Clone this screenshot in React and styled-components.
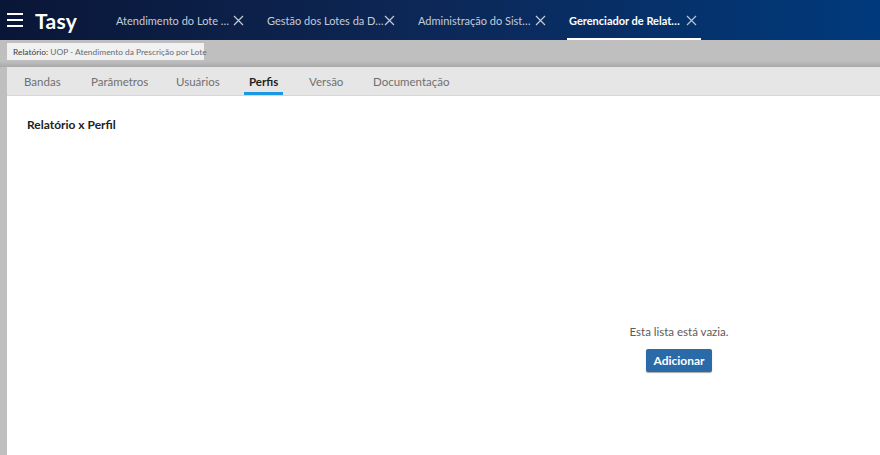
import React from "react";
import styled, { createGlobalStyle } from "styled-components";

const GlobalStyle = createGlobalStyle`
  html, body {
    margin: 0;
    padding: 0;
    height: 100%;
    overflow: hidden;
  }
  body {
    font-family: Lato, "Liberation Sans", sans-serif;
    background: #bfbfbf;
  }
  #root {
    height: 100%;
  }
`;

const appTabs = [
  { id: 1, label: "Atendimento do Lote …" },
  { id: 2, label: "Gestão dos Lotes da D…" },
  { id: 3, label: "Administração do Sist…" },
  { id: 4, label: "Gerenciador de Relat…", active: true }
];

// width of each tab slot, label start to next label start
const reportTabs = [
  { label: "Bandas", width: 67 },
  { label: "Parâmetros", width: 85 },
  { label: "Usuários", width: 73 },
  { label: "Perfis", width: 60, active: true },
  { label: "Versão", width: 64 },
  { label: "Documentação" }
];

const Page = styled.div`
  display: flex;
  flex-direction: column;
  height: 100%;
`;

const Header = styled.header`
  height: 40px;
  flex-shrink: 0;
  display: flex;
  align-items: stretch;
  background: linear-gradient(90deg, #0a1637 0%, #0d2654 45%, #003a7c 100%);
  color: #fff;
`;

const Burger = styled.button`
  width: 16px;
  margin: 0 12px 0 7px;
  padding: 0;
  border: 0;
  background: none;
  display: flex;
  flex-direction: column;
  justify-content: center;
  gap: 4px;

  span {
    display: block;
    height: 2px;
    background: #fff;
  }
`;

const Logo = styled.div`
  font-size: 21px;
  font-weight: 700;
  display: flex;
  align-items: center;
  width: 81px;
  letter-spacing: 0.3px;
`;

const AppTab = styled.div`
  display: flex;
  align-items: center;
  width: ${(p) => (p.$active ? "134px" : "151px")};
  box-sizing: border-box;
  padding-left: ${(p) => (p.$active ? "2px" : "0")};
  margin-left: ${(p) => (p.$active ? "-2px" : "0")};
  padding-top: 2px;
  font-size: 11px;
  font-weight: ${(p) => (p.$active ? 700 : 400)};
  color: ${(p) => (p.$active ? "#ffffff" : "#c4cbd8")};
  border-bottom: 2px solid ${(p) => (p.$active ? "#ffffff" : "transparent")};
`;

const TabLabel = styled.span`
  width: 117px;
  white-space: nowrap;
  overflow: hidden;
`;

const Close = styled.svg`
  width: 11px;
  height: 11px;
  flex-shrink: 0;
`;

const Body = styled.div`
  flex: 1;
  display: flex;
  flex-direction: column;
  padding-left: 7px;
`;

const CrumbBar = styled.div`
  height: 27px;
  display: flex;
  align-items: flex-start;
  padding: 3px 0 0 7px;
  margin-left: -7px;
  box-sizing: border-box;
  background: linear-gradient(180deg, #bfbfbf 0%, #bfbfbf 78%, #a9a9a9 100%);
`;

const Crumb = styled.div`
  height: 17px;
  width: 197px;
  box-sizing: border-box;
  background: #f1f1f1;
  font-size: 8.4px;
  color: #666b73;
  display: flex;
  align-items: center;
  padding-left: 6px;
  white-space: nowrap;

  b {
    font-weight: 400;
    color: #3d3d3d;
  }
`;

const Panel = styled.main`
  flex: 1;
  background: #fff;
  display: flex;
  flex-direction: column;
`;

const TabBar = styled.nav`
  height: 28px;
  flex-shrink: 0;
  background: #e6e6e6;
  border-bottom: 1px solid #d6d6d6;
  display: flex;
  align-items: stretch;
  padding-left: 12px;
`;

const TabItem = styled.div`
  display: flex;
  align-items: stretch;
  width: ${(p) => (p.$width ? `${p.$width}px` : "auto")};
`;

const TabText = styled.span`
  display: flex;
  align-items: center;
  padding: 3px 5px 0;
  font-size: 11.5px;
  color: ${(p) => (p.$active ? "#1e1e1e" : "#707070")};
  font-weight: ${(p) => (p.$active ? 700 : 400)};
  border-bottom: 3px solid ${(p) => (p.$active ? "#1a98e2" : "transparent")};
`;

const Content = styled.section`
  flex: 1;
  display: flex;
  flex-direction: column;
  padding: 21px 20px 0 20px;
`;

const Title = styled.h2`
  margin: 0;
  font-size: 12px;
  font-weight: 700;
  color: #222;
`;

const Empty = styled.div`
  display: flex;
  flex-direction: column;
  align-items: center;
  gap: 11px;
  margin-top: 193px;
  margin-left: 547px;
  width: 210px;
`;

const EmptyText = styled.p`
  margin: 0;
  font-size: 11.5px;
  color: #5c5c5c;
`;

const AddButton = styled.button`
  height: 23px;
  width: 66px;
  border: 0;
  border-radius: 2px;
  background: #2a6aa8;
  color: #fff;
  font-family: inherit;
  font-size: 12px;
  font-weight: 700;
  box-shadow: 0 1px 1px rgba(0, 0, 0, 0.35);
`;

export default function App() {
  return (
    <Page>
      <GlobalStyle />
      <Header>
        <Burger aria-label="menu">
          <span />
          <span />
          <span />
        </Burger>
        <Logo>Tasy</Logo>
        {appTabs.map((t) => (
          <AppTab key={t.id} $active={t.active}>
            <TabLabel>{t.label}</TabLabel>
            <Close viewBox="0 0 11 11">
              <path
                d="M1 1L10 10M10 1L1 10"
                stroke={t.active ? "#b8c2d4" : "#c4cbd8"}
                strokeWidth="1.2"
                fill="none"
              />
            </Close>
          </AppTab>
        ))}
      </Header>
      <Body>
        <CrumbBar>
          <Crumb>
            <b>Relatório:</b>&nbsp;UOP - Atendimento da Prescrição por Lote
          </Crumb>
        </CrumbBar>
        <Panel>
          <TabBar>
            {reportTabs.map((t) => (
              <TabItem key={t.label} $width={t.width}>
                <TabText $active={t.active}>{t.label}</TabText>
              </TabItem>
            ))}
          </TabBar>
          <Content>
            <Title>Relatório x Perfil</Title>
            <Empty>
              <EmptyText>Esta lista está vazia.</EmptyText>
              <AddButton>Adicionar</AddButton>
            </Empty>
          </Content>
        </Panel>
      </Body>
    </Page>
  );
}
